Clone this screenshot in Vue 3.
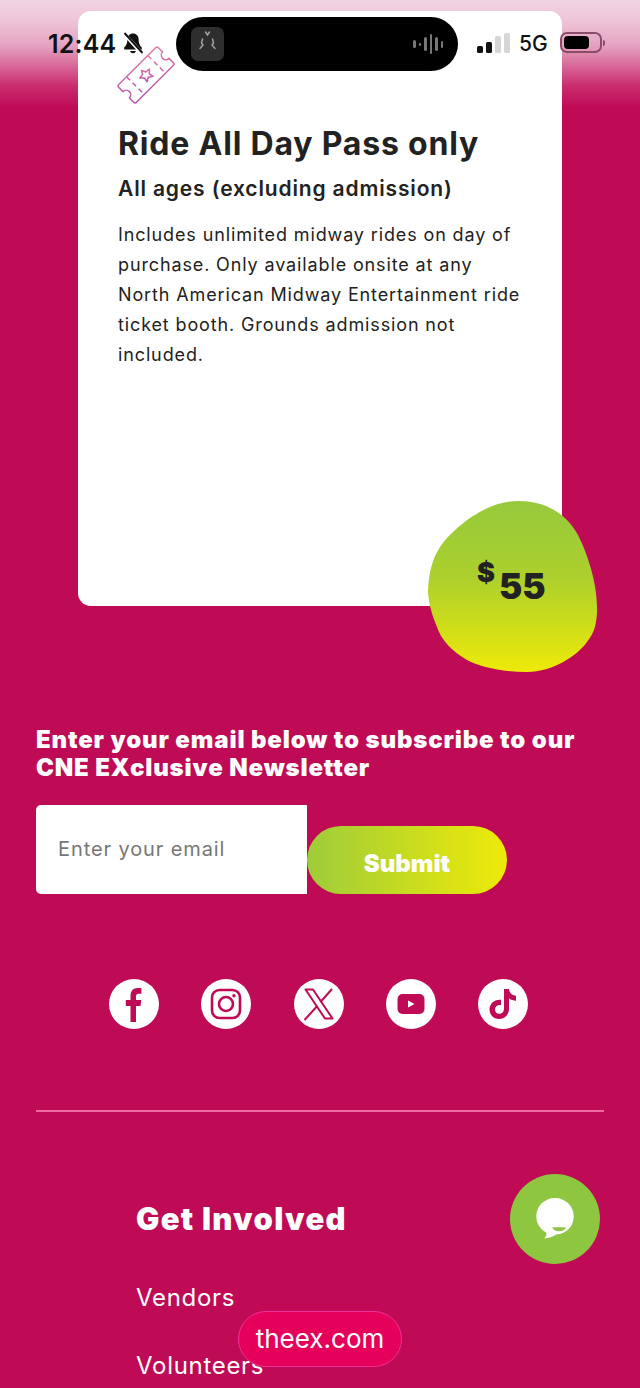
<script setup>
const socials = ['facebook', 'instagram', 'x', 'youtube', 'tiktok']
const links = ['Vendors', 'Volunteers']
</script>

<template>
  <div class="page">
    <!-- iOS status bar sits over the page -->
    <div class="status">
      <span class="time">12:44</span>
      <svg class="bell" width="24" height="26" viewBox="0 0 24 26">
        <path d="M12 2.500c-3.400 0-5.600 2.500-5.600 5.800 0 4-1.100 6.200-3.200 8.200v2h17.600v-2c-2.100-2-3.200-4.200-3.200-8.200 0-3.300-2.200-5.800-5.600-5.800z" fill="#111" />
        <path d="M9 20a3.100 3.100 0 0 0 6 0z" fill="#111" />
        <path d="M3 2.500l18 20" stroke="#fff" stroke-width="3.600" />
        <path d="M3.500 2l18 20" stroke="#111" stroke-width="1.900" />
      </svg>
      <div class="island">
        <div class="island-thumb">
          <svg width="33" height="34" viewBox="0 0 33 34" fill="none" stroke="#a0a0a0" stroke-width="1.500" stroke-linecap="round">
            <path d="M11.500 12l-1 4 1.500 2-3 3.500M21.500 12l1 4-1.500 2 3 3.500M14.500 5l2 3 2-3" />
          </svg>
        </div>
        <div class="wave">
          <i v-for="(h, n) in [8, 3, 14, 20, 14, 7]" :key="n" :style="{ height: h + 'px' }"></i>
        </div>
      </div>
      <div class="signal">
        <i class="on" style="height: 7px"></i>
        <i class="on" style="height: 11px"></i>
        <i style="height: 17px"></i>
        <i style="height: 20px"></i>
      </div>
      <span class="net">5G</span>
      <div class="battery"><div class="battery-fill"></div></div>
      <div class="battery-cap"></div>
    </div>

    <div class="card-wrap">
      <section class="card">
        <svg class="ticket" width="60" height="60" viewBox="0 0 60 60" fill="none">
          <defs>
            <linearGradient id="tk" x1="0" y1="1" x2="1" y2="0">
              <stop offset="0" stop-color="#b84fb0" />
              <stop offset="1" stop-color="#e27aa6" />
            </linearGradient>
          </defs>
          <g transform="translate(30 29) rotate(-45)" stroke="url(#tk)" stroke-width="1.500" stroke-linejoin="round">
            <path d="M-28-10.500a2 2 0 0 1 2-2h52a2 2 0 0 1 2 2v6a4.500 4.500 0 0 0 0 9v6a2 2 0 0 1-2 2h-52a2 2 0 0 1-2-2v-6a4.500 4.500 0 0 0 0-9z" />
            <path d="M-15-12.500v25M15-12.500v25" stroke-dasharray="5 3.500" />
            <path d="M0-6.500l2 4.200 4.600.6-3.400 3.200.9 4.500L0 3.300l-4.100 2.200.9-4.500-3.400-3.200 4.600-.6z" />
          </g>
        </svg>
        <h2 class="title">Ride All Day Pass only</h2>
        <p class="sub">All ages (excluding admission)</p>
        <p class="desc">
          Includes unlimited midway rides on day of purchase. Only available onsite at any North American Midway Entertainment ride ticket booth. Grounds admission not included.
        </p>
      </section>
      <div class="price">
        <svg width="170" height="172" viewBox="0 0 170 172">
          <defs>
            <linearGradient id="blob" x1="0" y1="0" x2="0" y2="1">
              <stop offset="0" stop-color="#96c93d" />
              <stop offset="0.45" stop-color="#acd02c" />
              <stop offset="1" stop-color="#eeea08" />
            </linearGradient>
          </defs>
          <path d="M90 1C117 1 138 13 150 35c10 20 20 50 19 78-1 15-4 21-10 29-9 13-34 30-60 30-24 0-47-5-60-12-14-8-26-20-30-33C3 113 0 100 0 90c1-20 5-32 12-43C22 32 55 1 90 1z" fill="url(#blob)" />
        </svg>
        <div class="price-text"><span class="dollar">$</span><span class="amount">55</span></div>
      </div>
    </div>

    <section class="news">
      <h3 class="news-title">Enter your email below to subscribe to our CNE EXclusive Newsletter</h3>
      <form class="news-form" @submit.prevent>
        <div class="email">Enter your email</div>
        <button class="submit" type="submit">Submit</button>
      </form>
    </section>

    <div class="socials">
      <a v-for="s in socials" :key="s" class="social">
        <svg width="50" height="50" viewBox="0 0 50 50">
          <template v-if="s === 'facebook'">
            <path d="M21.500 43V27h-4.700v-6h4.700v-4.300c0-5 2.900-7.700 7.300-7.700 1.300 0 2.600.1 3.600.3v5.500h-2.600c-2.200 0-2.800 1.200-2.800 2.900V21h5.300l-.8 6h-4.500v16z" fill="#bf0a56" />
          </template>
          <template v-else-if="s === 'instagram'">
            <rect x="11" y="11" width="28" height="28" rx="7.500" fill="none" stroke="#bf0a56" stroke-width="2.600" />
            <circle cx="25" cy="25" r="7" fill="none" stroke="#bf0a56" stroke-width="2.600" />
            <circle cx="33" cy="16.800" r="1.700" fill="#bf0a56" />
          </template>
          <template v-else-if="s === 'x'">
            <path d="M11.500 10.500h7.500l19.500 29h-7.500z" fill="none" stroke="#bf0a56" stroke-width="2" stroke-linejoin="round" />
            <path d="M38 10l-11.500 13M22.800 27.500L10.500 41" fill="none" stroke="#bf0a56" stroke-width="2" />
          </template>
          <template v-else-if="s === 'youtube'">
            <rect x="11.500" y="15" width="27" height="20" rx="5" fill="#bf0a56" />
            <path d="M22 21.500l6.500 3.500-6.500 3.500z" fill="#fff" />
          </template>
          <template v-else>
            <path d="M26 10h5c.3 3.800 2.800 6.300 7 6.700v5c-2.700 0-5-.8-7-2.200v10.300c0 6-4.400 10.200-10 10.200s-9.500-4.300-9.500-9.500c0-6 5-10.500 11.500-9.800v5.300c-3.300-.6-6 1.500-6 4.400 0 2.500 1.900 4.400 4.200 4.400 2.600 0 4.800-2 4.800-5z" fill="#bf0a56" />
          </template>
        </svg>
      </a>
    </div>

    <hr class="rule" />

    <nav class="foot">
      <h4 class="foot-title">Get Involved</h4>
      <a v-for="l in links" :key="l" class="foot-link">{{ l }}</a>
    </nav>

    <button class="chat" aria-label="Chat">
      <svg width="42" height="46" viewBox="0 0 46 50">
        <path d="M23 2C11.500 2 2.500 11 2.500 22c0 8 4.500 14.500 11 18 .5 2-.8 4.500-2.300 6.300 5.200-.3 9.700-1.800 13-4.300C36 41.400 43.500 32.800 43.500 22 43.500 11 34.500 2 23 2z" fill="#fff" />
        <path d="M20 34h15c-.8 3-3.800 4.500-7.500 4.500S20.800 37 20 34z" fill="#8fc63f" />
      </svg>
    </button>

    <div class="url">theex.com</div>
  </div>
</template>

<style scoped>
.page {
  position: relative;
  height: 1388px;
  overflow: hidden;
  padding-top: 11px;
  box-sizing: border-box;
  background: linear-gradient(180deg, #f1d3e2 0, #eec6d9 20px, #e5a3c0 45px, #d96b9b 65px, #ca2f70 85px, #bf0a56 108px, #bf0a56 100%);
  font-family: Inter, "Liberation Sans", sans-serif;
  color: #fff;
}

/* Status bar */
.status {
  position: absolute;
  inset: 0 0 auto 0;
  height: 80px;
  z-index: 5;
  color: #111;
}
.time {
  position: absolute;
  left: 48px;
  top: 29px;
  font: 600 25px/30px Inter, sans-serif;
  letter-spacing: 0.2px;
}
.bell {
  position: absolute;
  left: 121px;
  top: 31px;
}
.island {
  position: absolute;
  left: 176px;
  top: 17px;
  width: 282px;
  height: 54px;
  border-radius: 27px;
  background: #000;
}
.island-thumb {
  position: absolute;
  left: 15px;
  top: 10px;
  width: 33px;
  height: 34px;
  border-radius: 7px;
  background: #2e2e2e;
}
.wave {
  position: absolute;
  left: 237px;
  top: 17px;
  height: 20px;
  display: flex;
  align-items: center;
  gap: 3px;
}
.wave i {
  display: block;
  width: 2.500px;
  background: #777;
  border-radius: 1.500px;
}
.signal {
  position: absolute;
  left: 477px;
  top: 33px;
  height: 20px;
  display: flex;
  align-items: flex-end;
  gap: 3px;
}
.signal i {
  display: block;
  width: 6px;
  border-radius: 1.500px;
  background: #d6d6d6;
}
.signal i.on {
  background: #111;
}
.net {
  position: absolute;
  left: 519px;
  top: 30px;
  font: 500 21px/28px Inter, sans-serif;
}
.battery {
  position: absolute;
  left: 560px;
  top: 32px;
  width: 42px;
  height: 21px;
  box-sizing: border-box;
  padding: 2px;
  border: 2px solid #8a4d69;
  border-radius: 7px;
}
.battery-fill {
  width: 25px;
  height: 100%;
  border-radius: 4px;
  background: #000;
}
.battery-cap {
  position: absolute;
  left: 603px;
  top: 40px;
  width: 2px;
  height: 6px;
  border-radius: 0 2px 2px 0;
  background: #8a4d69;
}

/* Card */
.card-wrap {
  position: relative;
  width: 484px;
  margin-left: 78px;
}
.card {
  height: 595px;
  box-sizing: border-box;
  padding: 35px 36px 0 40px;
  background: #fff;
  border-radius: 13px;
  color: #222;
}
.ticket {
  display: block;
  margin-left: -2px;
}
.title {
  margin: 18px 0 0;
  font-size: 32px;
  line-height: 40px;
  font-weight: 700;
  letter-spacing: 0.800px;
}
.sub {
  margin: 11px 0 0;
  font-size: 21px;
  line-height: 28px;
  font-weight: 600;
  letter-spacing: 0.850px;
}
.desc {
  margin: 17px 0 0;
  font-size: 18px;
  line-height: 30px;
  letter-spacing: 0.870px;
}
.price {
  position: absolute;
  left: 350px;
  top: 489px;
  width: 170px;
  height: 172px;
}
.price svg {
  display: block;
}
.price-text {
  position: absolute;
  left: 49px;
  top: 58px;
  display: flex;
  align-items: flex-start;
  color: #222;
  font-weight: 900;
}
.dollar {
  font-size: 27px;
  line-height: 30px;
}
.amount {
  margin-left: 4px;
  margin-top: 8px;
  font-size: 35px;
  line-height: 40px;
}

/* Newsletter */
.news {
  margin: 120px 36px 0;
}
.news-title {
  margin: 0;
  width: 568px;
  font-size: 24px;
  line-height: 28px;
  font-weight: 900;
  letter-spacing: 0.850px;
}
.news-form {
  display: flex;
  align-items: flex-end;
  margin-top: 23px;
}
.email {
  width: 271px;
  height: 89px;
  box-sizing: border-box;
  padding: 30px 0 0 22px;
  background: #fff;
  border-radius: 5px 0 0 5px;
  color: #777;
  font-size: 20px;
  line-height: 28px;
  letter-spacing: 0.900px;
}
.submit {
  width: 200px;
  height: 68px;
  padding: 8px 0 0;
  border: 0;
  border-radius: 34px;
  background: linear-gradient(90deg, #9fcc3a, #eeea08);
  color: #fff;
  font: 900 24px/28px Inter, sans-serif;
}

/* Social icons */
.socials {
  display: flex;
  gap: 42.250px;
  margin: 85px 0 0 109px;
}
.social {
  display: block;
  width: 50px;
  height: 50px;
  border-radius: 50%;
  background: #fff;
}
.social svg {
  display: block;
}

.rule {
  margin: 81px 36px 0;
  border: 0;
  border-top: 2px solid #ee6aa2;
}

/* Footer links */
.foot {
  display: flex;
  flex-direction: column;
  align-items: flex-start;
  margin: 87px 0 0 136px;
}
.foot-title {
  margin: 0;
  font-size: 31px;
  line-height: 40px;
  font-weight: 900;
  letter-spacing: 1.300px;
}
.foot-link {
  margin-top: 44px;
  font-size: 24px;
  line-height: 30px;
  letter-spacing: 0.700px;
}
.foot-link + .foot-link {
  margin-top: 38px;
}

.chat {
  position: absolute;
  left: 510px;
  top: 1174px;
  width: 90px;
  height: 90px;
  padding: 0;
  display: flex;
  align-items: center;
  justify-content: center;
  border: 0;
  border-radius: 50%;
  background: #8fc63f;
}
.url {
  position: absolute;
  left: 238px;
  top: 1311px;
  width: 164px;
  height: 56px;
  box-sizing: border-box;
  border: 1px solid #f0309a;
  border-radius: 28px;
  background: #e5005c;
  text-align: center;
  font-size: 26px;
  line-height: 54px;
}
</style>
